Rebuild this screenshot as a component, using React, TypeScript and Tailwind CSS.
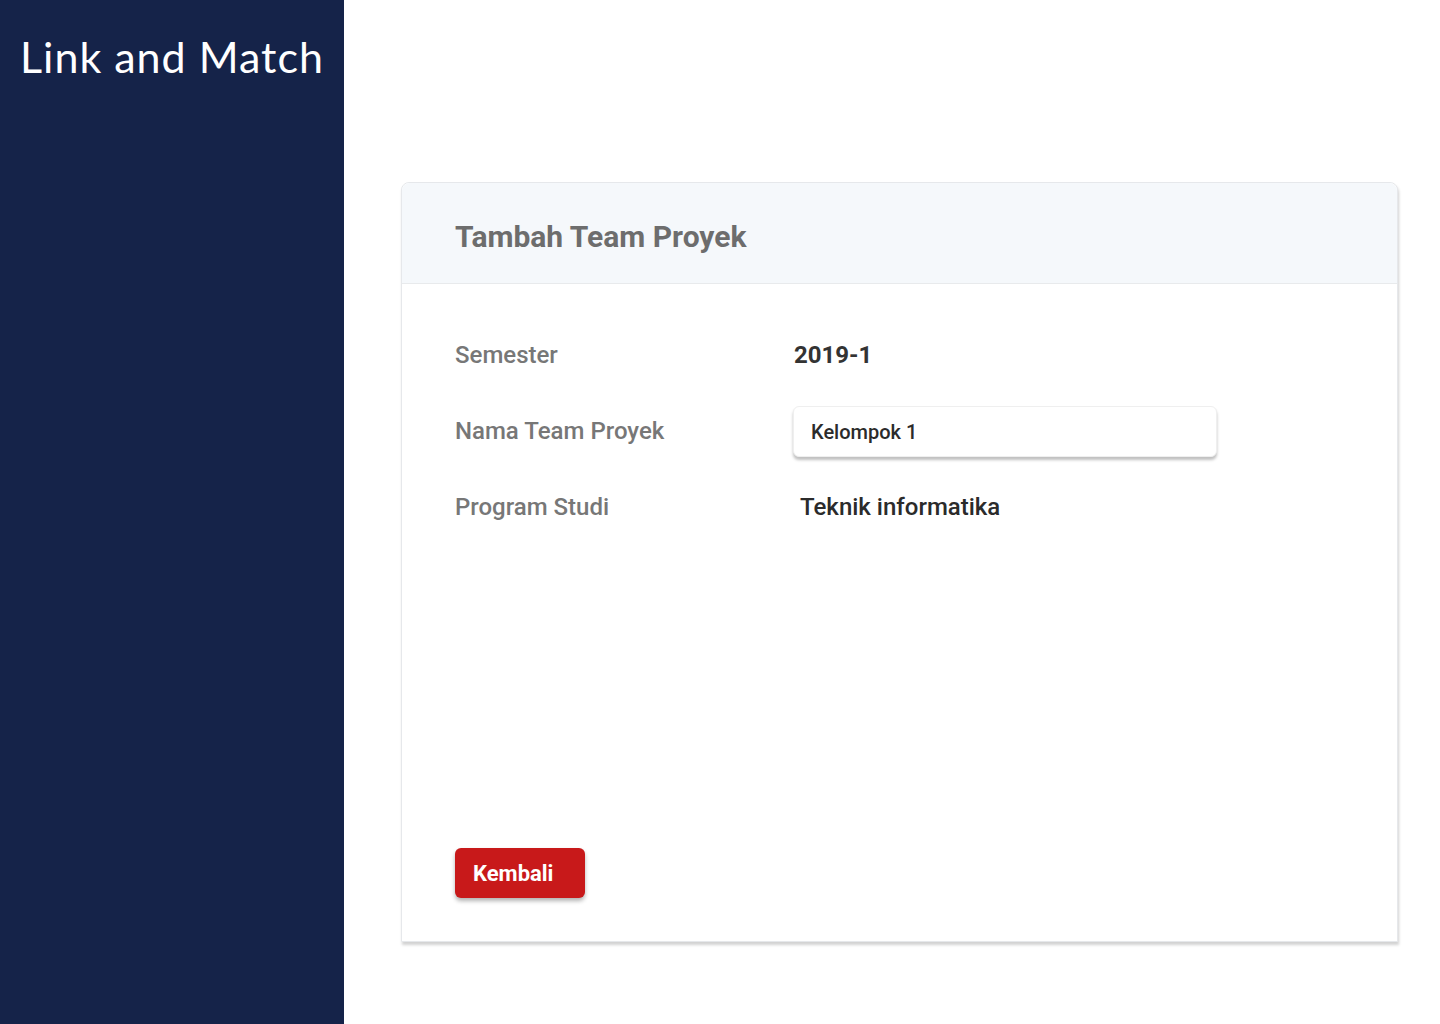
export default function App() {
  return (
    <div className="flex min-h-screen w-full bg-white" style={{ fontFamily: "Roboto, sans-serif" }}>
      <aside className="w-[344px] shrink-0 bg-[#152349] min-h-[1024px]">
        <h1 className="pl-[20px] pt-[30px] text-[43px] leading-[54px] tracking-[1px] text-white font-normal" style={{ fontFamily: "Lato, 'Open Sans', sans-serif" }}>
          Link and Match
        </h1>
      </aside>

      <main className="flex-1 pl-[57px] pr-[42px] pt-[182px]">
        <div className="flex h-[760px] flex-col rounded-t-[8px] border border-[#e6e8eb] bg-white shadow-[1px_3px_3px_rgba(0,0,0,0.18)]">
          <div className="flex h-[101px] items-center border-b border-[#e8eaec] bg-[#f5f8fb] rounded-t-[8px] pl-[53px] pt-[6px]">
            <h2 className="text-[30px] font-bold text-[#6d6d6d]">Tambah Team Proyek</h2>
          </div>

          <div className="flex flex-1 flex-col pl-[53px] pt-[45px] pb-[43px]">
            <div className="flex flex-col gap-[24px]">
              <div className="flex h-[52px] items-center">
                <span className="w-[339px] text-[24px] font-medium text-[#777777]">Semester</span>
                <span className="text-[24px] font-bold text-[#333333]">2019-1</span>
              </div>
              <div className="flex h-[52px] items-center">
                <span className="w-[338px] text-[24px] font-medium text-[#777777]">Nama Team Proyek</span>
                <div className="flex h-[51px] w-[424px] items-center rounded-[6px] border border-[#efefef] bg-white pl-[17px] shadow-[0_3px_3px_rgba(0,0,0,0.25)] mt-[1px]">
                  <span className="text-[20px] font-medium text-[#2b2b2b]">Kelompok 1</span>
                </div>
              </div>
              <div className="flex h-[52px] items-center">
                <span className="w-[345px] text-[24px] font-medium text-[#777777]">Program Studi</span>
                <span className="text-[24px] font-medium text-[#2b2b2b]">Teknik informatika</span>
              </div>
            </div>

            <div className="mt-auto">
              <button className="h-[50px] w-[130px] rounded-[6px] bg-[#c8191a] pl-[18px] text-left text-[22px] font-bold text-white shadow-[0_3px_4px_rgba(0,0,0,0.3)]">
                Kembali
              </button>
            </div>
          </div>
        </div>
      </main>
    </div>
  );
}
